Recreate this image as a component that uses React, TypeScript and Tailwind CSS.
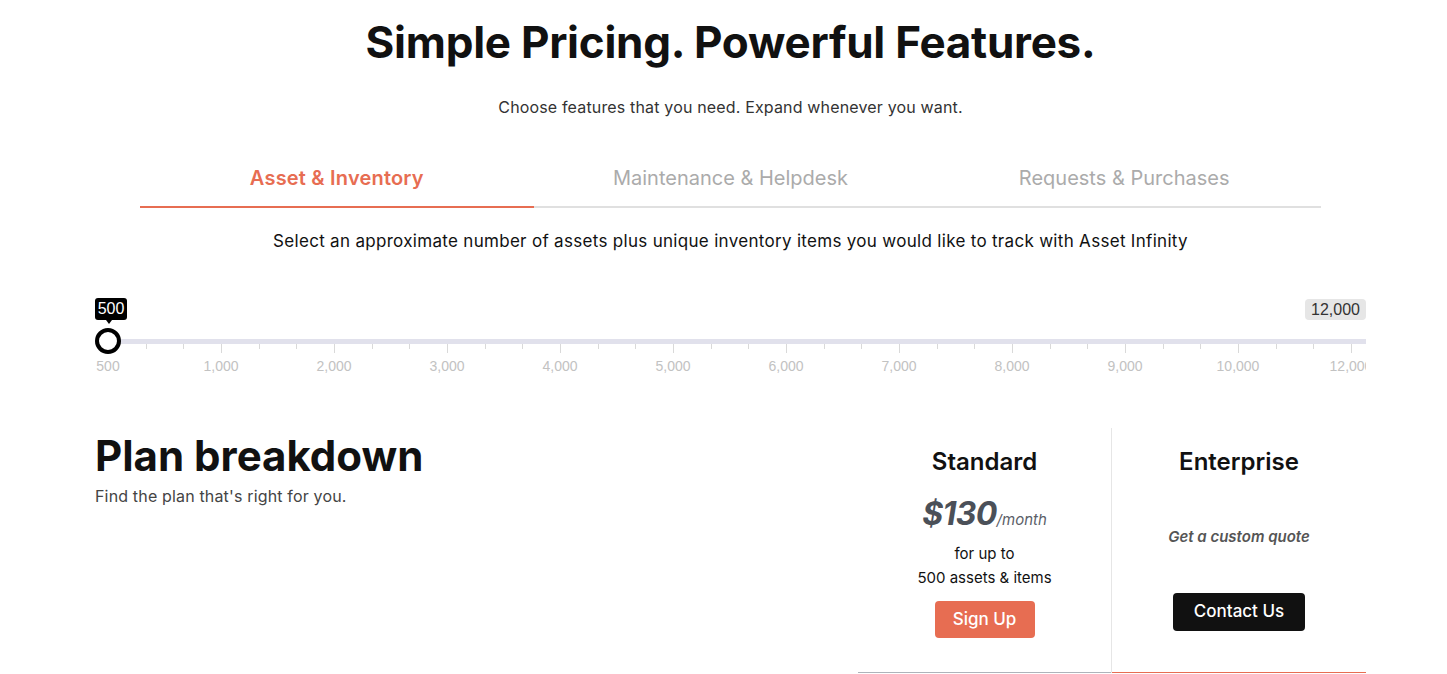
import React from "react";

const CORAL = "#e76d52";

const TABS = [
  { label: "Asset & Inventory", active: true },
  { label: "Maintenance & Helpdesk", active: false },
  { label: "Requests & Purchases", active: false },
];

const GRID_LABELS = [
  "500",
  "1,000",
  "2,000",
  "3,000",
  "4,000",
  "5,000",
  "6,000",
  "7,000",
  "8,000",
  "9,000",
  "10,000",
  "12,000",
];

// slider grid: majors every 113px starting 13px in, 3 sub steps each
const GRID_START = 13;
const GRID_STEP = 113;

function RangeSlider() {
  const minorTicks: number[] = [];
  for (let i = 0; i < GRID_LABELS.length - 1; i++) {
    minorTicks.push(GRID_START + GRID_STEP * i + GRID_STEP / 3);
    minorTicks.push(GRID_START + GRID_STEP * i + (GRID_STEP * 2) / 3);
  }

  return (
    <div className="relative mt-[43px] h-[80px] w-full overflow-hidden font-[family-name:'Liberation_Sans',Arial,sans-serif]">
      {/* track */}
      <div className="absolute left-0 right-0 top-[43px] h-[5px] bg-[#e1e1ec]" />

      {/* grid */}
      {GRID_LABELS.map((label, i) => (
        <React.Fragment key={label}>
          <div
            className="absolute top-[48px] h-[9px] w-px bg-[#d9d9d9]"
            style={{ left: GRID_START + GRID_STEP * i }}
          />
          <span
            className="absolute top-[62px] -translate-x-1/2 text-[14px] leading-4 text-[#c2c2c2]"
            style={{ left: GRID_START + GRID_STEP * i }}
          >
            {label}
          </span>
        </React.Fragment>
      ))}
      {minorTicks.map((x) => (
        <div
          key={x}
          className="absolute top-[48px] h-[5px] w-px bg-[#d9d9d9]"
          style={{ left: x }}
        />
      ))}

      {/* current value */}
      <div className="absolute left-0 top-[2px] flex h-[22px] w-[32px] items-center justify-center rounded-[3px] bg-black text-[16px] text-white">
        500
      </div>
      <div className="absolute left-[11px] top-[24px] h-0 w-0 border-x-[3px] border-t-[4px] border-x-transparent border-t-black" />
      <div className="absolute left-0 top-[32px] h-[26px] w-[26px] rounded-full border-[4px] border-black bg-white" />

      {/* max label */}
      <div className="absolute right-0 top-[3px] flex h-[21px] items-center rounded-[4px] bg-[#e6e6e6] px-[6px] text-[16px] text-[#333]">
        12,000
      </div>
    </div>
  );
}

export default function App() {
  return (
    <div className="min-h-screen bg-white font-[family-name:Inter,'Noto_Sans',sans-serif] text-[#111]">
      <div className="ml-[95px] w-[1271px] pt-[16px]">
        <h1 className="text-center text-[44px] font-bold leading-[52px] tracking-[-0.006em] text-[#111]">
          Simple Pricing. Powerful Features.
        </h1>
        <p className="mt-[27px] text-center text-[16px] leading-6 tracking-[0.01em] text-[#333]">
          Choose features that you need. Expand whenever you want.
        </p>

        <div className="mx-[45px] mt-[45px] grid grid-cols-3 border-b-2 border-[#e0e0e0]">
          {TABS.map((tab) =>
            tab.active ? (
              <button
                key={tab.label}
                className="-mb-[2px] border-b-2 border-[#e76d52] pb-[14px] text-[20px] font-semibold leading-7 tracking-[0.01em] text-[#e76d52]"
              >
                {tab.label}
              </button>
            ) : (
              <button
                key={tab.label}
                className="pb-[14px] text-[20px] leading-7 text-[#ababab]"
              >
                {tab.label}
              </button>
            )
          )}
        </div>

        <p className="mt-[21px] text-center text-[17px] leading-6 tracking-[0.018em] text-[#111]">
          Select an approximate number of assets plus unique inventory items you
          would like to track with Asset Infinity
        </p>

        <RangeSlider />

        <section className="mt-[52px] flex h-[245px]">
          <div className="flex-1 pt-[3px]">
            <h2 className="text-[42px] font-bold leading-[50px] text-[#111]">
              Plan breakdown
            </h2>
            <p className="mt-[3px] text-[16px] leading-6 tracking-[0.01em] text-[#444]">
              Find the plan that's right for you.
            </p>
          </div>

          <div className="flex w-[253px] flex-col">
            <div className="flex flex-1 flex-col items-center pt-[18px]">
              <h3 className="text-[24px] font-semibold leading-8 text-[#111]">
                Standard
              </h3>
              <p className="mt-[16px] leading-10 text-[#4b5058]">
                <span className="text-[32px] font-bold italic tracking-[-0.02em]">
                  $130
                </span>
                <span className="text-[15px] italic text-[#5b6068]">
                  /month
                </span>
              </p>
              <p className="mt-[2px] text-[15px] leading-6 text-[#111]">
                for up to
              </p>
              <p className="text-[15px] leading-6 text-[#111]">
                500 assets &amp; items
              </p>
              <button
                className="mt-[11px] h-[37px] w-[100px] rounded-[4px] text-[17px] font-medium text-white"
                style={{ backgroundColor: CORAL }}
              >
                Sign Up
              </button>
            </div>
            <div className="h-px bg-[#aeb3ba]" />
          </div>

          <div className="flex w-[255px] flex-col border-l border-[#e6e6e6]">
            <div className="flex flex-1 flex-col items-center pt-[18px]">
              <h3 className="text-[24px] font-semibold leading-8 text-[#111]">
                Enterprise
              </h3>
              <p className="mt-[47px] text-[15px] font-semibold italic leading-6 text-[#555]">
                Get a custom quote
              </p>
              <button className="mt-[44px] h-[38px] w-[132px] rounded-[4px] bg-[#111] text-[17px] font-medium text-white">
                Contact Us
              </button>
            </div>
            <div className="h-px bg-[#e76d52]" />
          </div>
        </section>
      </div>
    </div>
  );
}
